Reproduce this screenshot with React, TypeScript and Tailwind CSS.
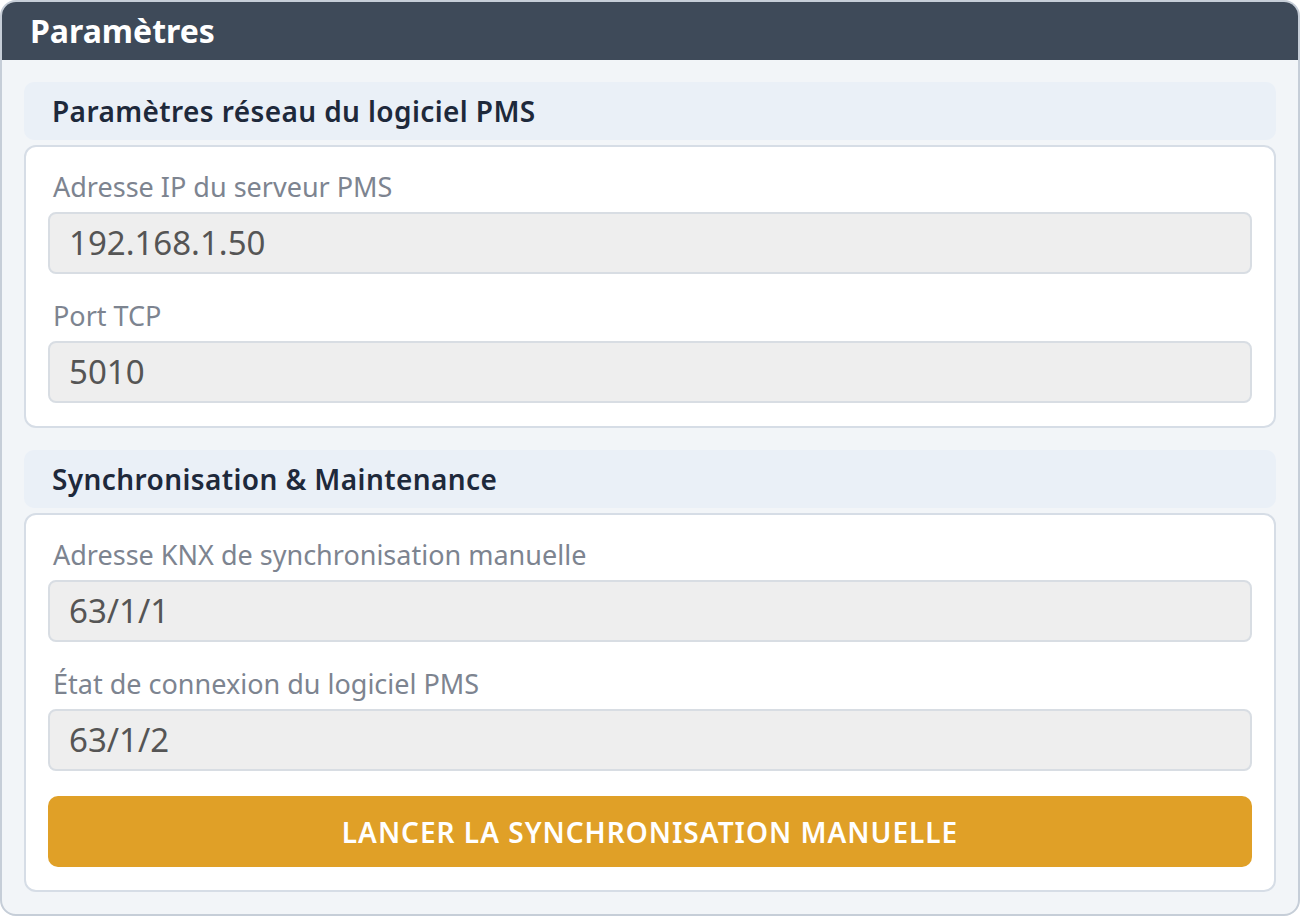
import React from "react";

const font = { fontFamily: '"Noto Sans", "Open Sans", Arial, sans-serif' };

function Field({ label, value }: { label: string; value: string }) {
  return (
    <div className="flex flex-col">
      <div className="h-[34px] flex items-center px-[5px] text-[27px] leading-none text-[#7d8490]">{label}</div>
      <div className="mt-[9px] h-[62px] rounded-[8px] border-2 border-[#d8dde3] bg-[#eeeeee] flex items-center px-[19px] text-[33px] text-[#555555]">
        {value}
      </div>
    </div>
  );
}

function SectionHeader({ title }: { title: string }) {
  return (
    <div className="h-[58px] rounded-[10px] bg-[#eaf0f7] flex items-center px-[28px] text-[28px] tracking-[0.4px] font-semibold text-[#1e293b]">
      {title}
    </div>
  );
}

export default function App() {
  return (
    <div className="w-[1300px] h-[917px] bg-white" style={font}>
      <div className="w-[1300px] h-[916px] rounded-[16px] border-2 border-[#c6ced8] bg-[#f2f5f8] overflow-hidden flex flex-col">
        <div className="h-[58px] bg-[#3e4a59] flex items-center px-[28px] text-[32px] font-bold text-white shrink-0">
          Paramètres
        </div>
        <div className="flex flex-col px-[22px] pt-[22px]">
          <SectionHeader title="Paramètres réseau du logiciel PMS" />
          <div className="mt-[5px] rounded-[12px] border-2 border-[#d6dde6] bg-white px-[22px] pt-[22px] pb-[23px] flex flex-col gap-[24px]">
            <Field label="Adresse IP du serveur PMS" value="192.168.1.50" />
            <Field label="Port TCP" value="5010" />
          </div>
          <div className="mt-[22px]">
            <SectionHeader title="Synchronisation & Maintenance" />
          </div>
          <div className="mt-[5px] rounded-[12px] border-2 border-[#d6dde6] bg-white px-[22px] pt-[22px] pb-[23px] flex flex-col gap-[24px]">
            <Field label="Adresse KNX de synchronisation manuelle" value="63/1/1" />
            <Field label="État de connexion du logiciel PMS" value="63/1/2" />
            <button className="mt-[1px] h-[71px] rounded-[10px] bg-[#e0a027] text-white text-[28px] tracking-[1px] font-semibold uppercase flex items-center justify-center">
              Lancer la synchronisation manuelle
            </button>
          </div>
        </div>
      </div>
    </div>
  );
}
